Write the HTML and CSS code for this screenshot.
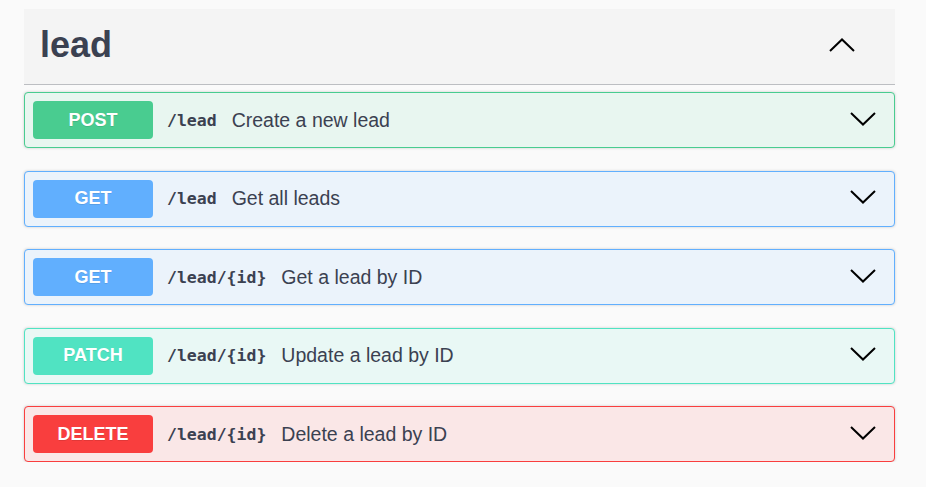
FILE: index.html
```html
<!DOCTYPE html>
<html>
<head>
<meta charset="utf-8">
<link rel="stylesheet" href="styles.css">
</head>
<body>
<div class="section">
  <div class="tag-header">
    <h3 class="tag-title">lead</h3>
    <svg class="chev-up" width="26" height="14" viewBox="0 0 26 14"><polyline points="1,13 13,1.5 25,13" fill="none" stroke="#000" stroke-width="2"/></svg>
  </div>
  <div class="ops">
    <div class="op op-post">
      <span class="method">POST</span>
      <span class="path">/lead</span>
      <span class="desc">Create a new lead</span>
      <svg class="chev" width="26" height="14" viewBox="0 0 26 14"><polyline points="1,1 13,12.5 25,1" fill="none" stroke="#000" stroke-width="2"/></svg>
    </div>
    <div class="op op-get">
      <span class="method">GET</span>
      <span class="path">/lead</span>
      <span class="desc">Get all leads</span>
      <svg class="chev" width="26" height="14" viewBox="0 0 26 14"><polyline points="1,1 13,12.5 25,1" fill="none" stroke="#000" stroke-width="2"/></svg>
    </div>
    <div class="op op-get">
      <span class="method">GET</span>
      <span class="path">/lead/{id}</span>
      <span class="desc">Get a lead by ID</span>
      <svg class="chev" width="26" height="14" viewBox="0 0 26 14"><polyline points="1,1 13,12.5 25,1" fill="none" stroke="#000" stroke-width="2"/></svg>
    </div>
    <div class="op op-patch">
      <span class="method">PATCH</span>
      <span class="path">/lead/{id}</span>
      <span class="desc">Update a lead by ID</span>
      <svg class="chev" width="26" height="14" viewBox="0 0 26 14"><polyline points="1,1 13,12.5 25,1" fill="none" stroke="#000" stroke-width="2"/></svg>
    </div>
    <div class="op op-delete">
      <span class="method">DELETE</span>
      <span class="path">/lead/{id}</span>
      <span class="desc">Delete a lead by ID</span>
      <svg class="chev" width="26" height="14" viewBox="0 0 26 14"><polyline points="1,1 13,12.5 25,1" fill="none" stroke="#000" stroke-width="2"/></svg>
    </div>
  </div>
</div>
</body>
</html>
```
FILE: styles.css
```css
html, body {
  margin: 0;
  padding: 0;
  background: #fafafa;
}
body {
  font-family: "Liberation Sans", Arial, sans-serif;
  color: #3b4151;
  padding-top: 9px;
}
.section {
  width: 871px;
  margin-left: 24px;
}
.tag-header {
  height: 75px;
  background: #f4f4f4;
  border-bottom: 1px solid rgba(59, 65, 81, 0.3);
  display: flex;
  align-items: center;
  padding: 0 40px 0 16px;
}
.tag-title {
  margin: 0;
  flex: 1;
  font-size: 36px;
  font-weight: 700;
  color: #3b4151;
  line-height: 40px;
  margin-top: -4px;
}
.chev-up {
  display: block;
  margin-top: -4px;
}
.ops {
  padding-top: 7px;
  display: flex;
  flex-direction: column;
  gap: 22.5px;
}
.op {
  height: 56px;
  box-sizing: border-box;
  border: 1px solid;
  border-radius: 4px;
  box-shadow: 0 0 3px rgba(0, 0, 0, 0.19);
  display: flex;
  align-items: center;
  padding: 0 18px 0 8px;
}
.method {
  width: 120px;
  height: 38px;
  border-radius: 4px;
  color: #fff;
  font-weight: 700;
  font-size: 18px;
  display: flex;
  align-items: center;
  justify-content: center;
  text-shadow: 0 1px 0 rgba(0, 0, 0, 0.1);
  flex-shrink: 0;
}
.path {
  margin-left: 14px;
  font-family: "DejaVu Sans Mono", "Liberation Mono", monospace;
  font-weight: 700;
  font-size: 16.5px;
  color: #3b4151;
}
.desc {
  margin-left: 15px;
  font-size: 19.5px;
  color: #3b4151;
  flex: 1;
}
.chev {
  display: block;
  margin-top: -3px;
}
.op-post { background: #e8f6f0; border-color: #49cc90; }
.op-post .method { background: #49cc90; }
.op-get { background: #ebf3fb; border-color: #61affe; }
.op-get .method { background: #61affe; }
.op-patch { background: #e9f8f5; border-color: #50e3c2; }
.op-patch .method { background: #50e3c2; }
.op-delete { background: #fae7e7; border-color: #f93e3e; }
.op-delete .method { background: #f93e3e; }
```
